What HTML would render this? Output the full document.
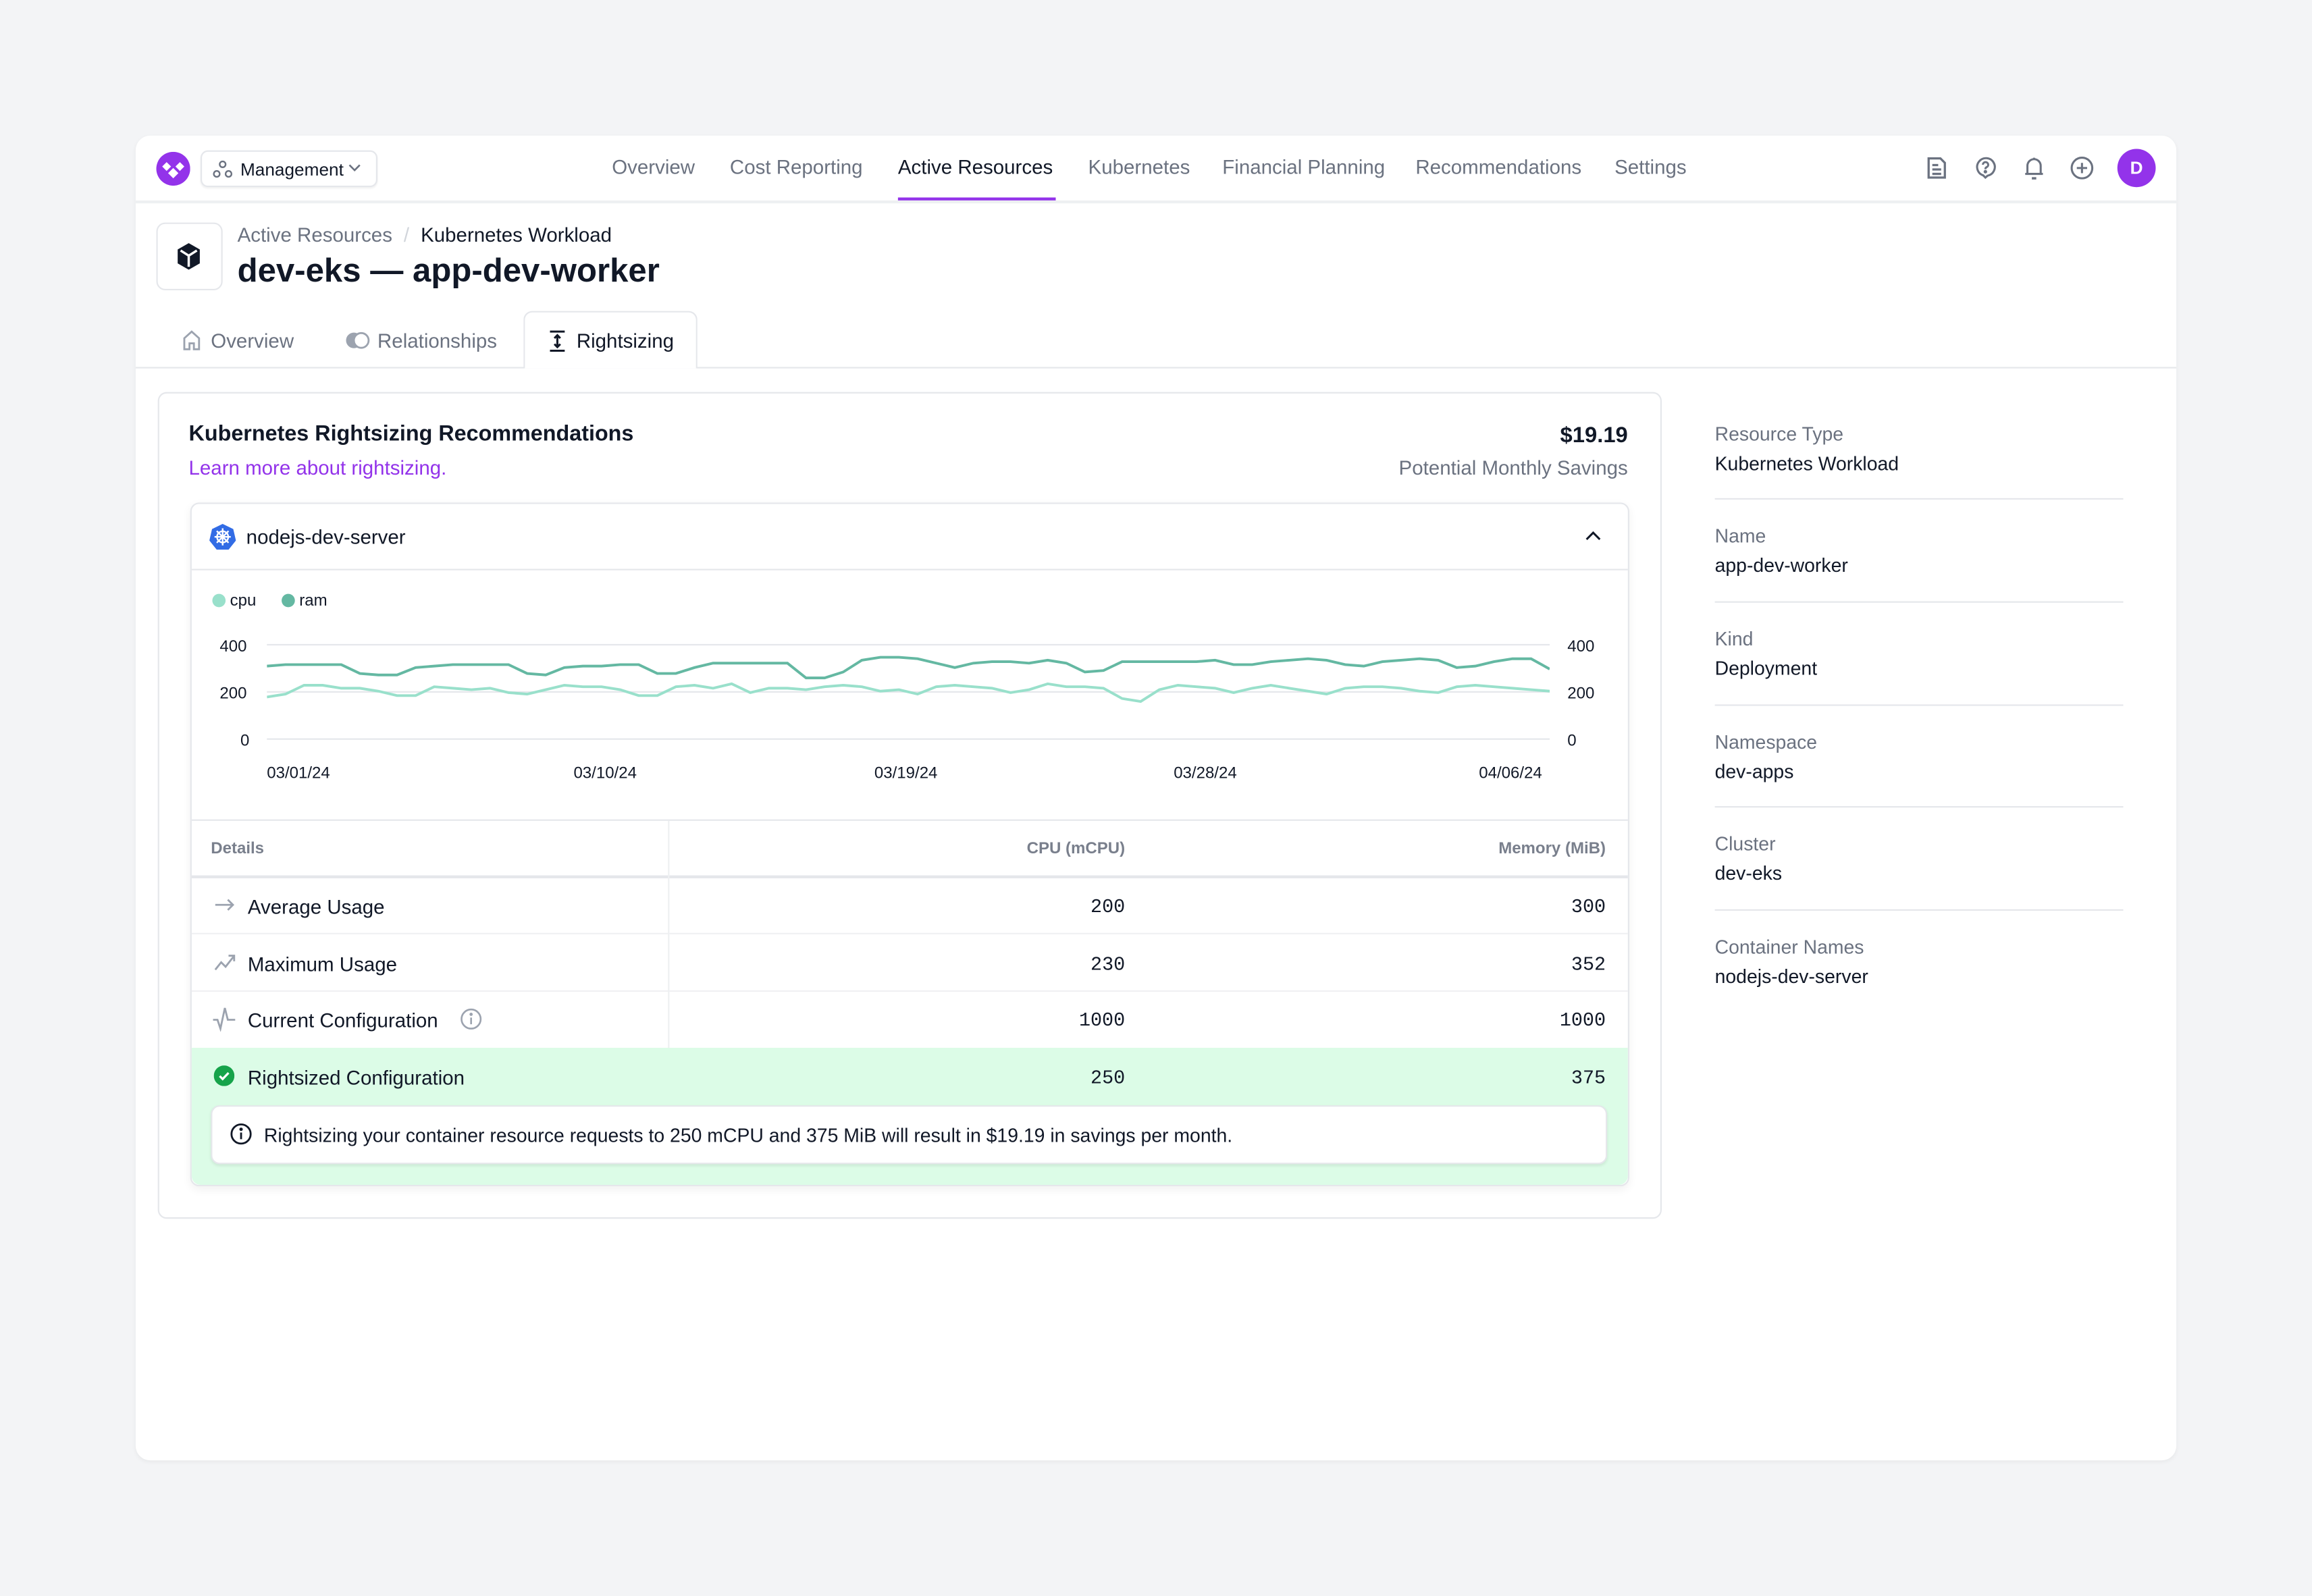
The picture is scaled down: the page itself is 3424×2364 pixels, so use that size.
<!DOCTYPE html>
<html><head><meta charset="utf-8"><style>
*{box-sizing:border-box;margin:0;padding:0}
html,body{width:3424px;height:2364px;overflow:hidden;background:#f3f4f6}
body{font-family:"Liberation Sans",Arial,sans-serif;color:#111827}
#s{position:absolute;left:0;top:0;width:1568px;height:1083px;transform:scale(2.18367,2.18283);transform-origin:0 0}
.a{position:absolute;white-space:nowrap}
.card{position:absolute;left:92px;top:92px;width:1384px;height:899px;background:#fff;border-radius:10px;box-shadow:0 1px 3px rgba(0,0,0,.05)}
.nav{font-size:13.5px;color:#6b7280;top:106px}
.g{color:#6b7280}
.lbl{font-size:13px;color:#6b7280}
.val{font-size:13px;color:#111827}
.hr{position:absolute;height:1px;background:#e5e7eb}
.mono{font-family:"Liberation Mono",monospace;font-size:13px}
</style></head><body><div id="s">
<div class="card"></div>
<div class="hr" style="left:92px;top:136px;width:1384px;background:#eef0f2;height:2px"></div>
<svg class="a" style="left:106px;top:103px" width="23" height="23" viewBox="0 0 23 23"><circle cx="11.5" cy="11.5" r="11.5" fill="#9333ea"/><path d="M7 7l3 3-3 3-3-3zM16 7l3 3-3 3-3-3zM11.5 11l3.5 3.5-3.5 3.5-3.5-3.5z" fill="#fff"/></svg>
<div class="a" style="left:136px;top:102px;width:120px;height:25px;border:1px solid #e5e7eb;border-radius:5px;box-shadow:0 1px 1px rgba(0,0,0,.05)"></div>
<svg class="a" style="left:144px;top:108px" width="14" height="14" viewBox="0 0 14 14" fill="none" stroke="#6b7280" stroke-width="1.1"><circle cx="7" cy="3.5" r="2"/><circle cx="3" cy="10" r="2"/><circle cx="11" cy="10" r="2"/></svg>
<div class="a" style="left:163px;top:108px;font-size:12px;color:#111827">Management</div>
<svg class="a" style="left:236px;top:111px" width="9" height="6" viewBox="0 0 9 6"><path d="M1 1l3.5 3.5L8 1" stroke="#6b7280" fill="none" stroke-width="1.2"/></svg>
<div class="a nav" style="left:415px">Overview</div>
<div class="a nav" style="left:495px">Cost Reporting</div>
<div class="a nav" style="left:609px;color:#111827">Active Resources</div>
<div class="a" style="left:609px;top:134px;width:107px;height:2px;background:#9333ea"></div>
<div class="a nav" style="left:738px">Kubernetes</div>
<div class="a nav" style="left:829px">Financial Planning</div>
<div class="a nav" style="left:960px">Recommendations</div>
<div class="a nav" style="left:1095px">Settings</div>
<svg class="a" style="left:1306px;top:106px" width="15" height="16" viewBox="0 0 15 16" fill="none" stroke="#6b7280" stroke-width="1.5"><path d="M2 1.5h8l3 3v10H2z"/><path d="M4.5 6h4M4.5 9h6M4.5 12h6"/></svg>
<svg class="a" style="left:1339px;top:106px" width="15" height="16" viewBox="0 0 15 16" fill="none" stroke="#6b7280" stroke-width="1.4"><path d="M7.5 14.5L6 13A6 6 0 1 1 9 13.2z"/><path d="M5.8 5.8a1.8 1.8 0 1 1 2.4 1.7c-.6.3-.7.7-.7 1.3"/><circle cx="7.5" cy="10.5" r=".5" fill="#6b7280"/></svg>
<svg class="a" style="left:1372px;top:105px" width="15" height="18" viewBox="0 0 15 18" fill="none" stroke="#6b7280" stroke-width="1.4"><path d="M3 13V7.5a4.5 4.5 0 0 1 9 0V13M1.5 13h12"/><path d="M6 16h3" stroke-width="1.6"/><path d="M7.5 2v1.2"/></svg>
<svg class="a" style="left:1404px;top:106px" width="16" height="16" viewBox="0 0 16 16" fill="none" stroke="#6b7280" stroke-width="1.4"><circle cx="8" cy="8" r="7"/><path d="M8 4.5v7M4.5 8h7"/></svg>
<div class="a" style="left:1436px;top:101px;width:26px;height:26px;border-radius:50%;background:#9333ea;color:#fff;font-size:12px;font-weight:bold;text-align:center;line-height:26px">D</div>
<div class="a" style="left:106px;top:151px;width:45px;height:46px;border:1px solid #e5e7eb;border-radius:6px"></div>
<svg class="a" style="left:119px;top:164px" width="18" height="20" viewBox="0 0 18 20"><path d="M9 1l7.5 4.3v9.4L9 19l-7.5-4.3V5.3z" fill="#111827"/><path d="M3.5 6L9 9.5 14.5 6M9 9.5V17" stroke="#fff" stroke-width="1.6" fill="none"/></svg>
<div class="a" style="left:161px;top:152px;font-size:13.5px"><span class="g">Active Resources</span> <span style="color:#d1d5db;margin:0 4px">/</span> <span>Kubernetes Workload</span></div>
<div class="a" style="left:161px;top:171px;font-size:22.5px;font-weight:bold;letter-spacing:0">dev-eks — app-dev-worker</div>
<div class="hr" style="left:92px;top:249px;width:1384px"></div>
<div class="a" style="left:355px;top:211px;width:118px;height:39px;border:1px solid #e5e7eb;border-bottom:none;border-radius:6px 6px 0 0;background:#fff"></div>
<svg class="a" style="left:124px;top:224px" width="12" height="14" viewBox="0 0 12 14" fill="none" stroke="#9ca3af" stroke-width="1.3"><path d="M1 13V5.5L6 1l5 4.5V13H7.5V9h-3v4z"/></svg>
<div class="a" style="left:143px;top:224px;font-size:13.5px"><span class="g">Overview</span></div>
<svg class="a" style="left:234px;top:225px" width="17" height="12" viewBox="0 0 17 12"><circle cx="6" cy="6" r="5.3" fill="#9ca3af"/><circle cx="11" cy="6" r="5" fill="#fff" stroke="#9ca3af" stroke-width="1.3"/></svg>
<div class="a" style="left:256px;top:224px;font-size:13.5px"><span class="g">Relationships</span></div>
<svg class="a" style="left:372px;top:224px" width="12" height="15" viewBox="0 0 12 15" fill="none" stroke="#111827" stroke-width="1.4"><path d="M1 1h10M1 14h10M6 3.5v8M4 5.5l2-2 2 2M4 9.5l2 2 2-2"/></svg>
<div class="a" style="left:391px;top:224px;font-size:13.5px">Rightsizing</div>
<div class="a" style="left:107px;top:266px;width:1020px;height:561px;border:1px solid #e5e7eb;border-radius:6px"></div>
<div class="a" style="left:128px;top:287px;font-size:14.8px;font-weight:bold">Kubernetes Rightsizing Recommendations</div>
<div class="a" style="left:128px;top:310px;font-size:13.5px;color:#9333ea">Learn more about rightsizing.</div>
<div class="a" style="right:464px;top:287px;font-size:15px;font-weight:bold">$19.19</div>
<div class="a" style="right:464px;top:310px;font-size:13.5px"><span class="g">Potential Monthly Savings</span></div>
<div class="a" style="left:129px;top:341px;width:976px;height:464px;border:1px solid #e5e7eb;border-radius:6px;box-shadow:0 2px 6px rgba(0,0,0,.06)"></div>
<svg class="a" style="left:142px;top:355px" width="18" height="18" viewBox="0 0 18 18"><path d="M9 .5l7.2 3.5 1.8 7.8-5 6.2H5l-5-6.2L1.8 4z" fill="#326ce5"/><g stroke="#fff" stroke-width="1.1" fill="none"><circle cx="9" cy="9.3" r="3.8"/><path d="M9 3.5v11.6M3.5 9.3h11M5 5.3l8 8M13 5.3l-8 8"/></g></svg>
<div class="a" style="left:167px;top:357px;font-size:13.5px">nodejs-dev-server</div>
<svg class="a" style="left:1075px;top:360px" width="11" height="7" viewBox="0 0 11 7"><path d="M1 6l4.5-4.5L10 6" stroke="#111827" stroke-width="1.4" fill="none"/></svg>
<div class="hr" style="left:130px;top:386px;width:974px"></div>
<div class="a" style="left:144px;top:403px;width:9px;height:9px;border-radius:50%;background:#99e0cb"></div>
<div class="a" style="left:156px;top:402px;font-size:11px">cpu</div>
<div class="a" style="left:191px;top:403px;width:9px;height:9px;border-radius:50%;background:#64b8a2"></div>
<div class="a" style="left:203px;top:402px;font-size:11px">ram</div>
<div class="hr" style="left:181px;top:437px;width:870px"></div>
<div class="hr" style="left:181px;top:469px;width:870px"></div>
<div class="hr" style="left:181px;top:501px;width:870px"></div>
<div class="a" style="left:149px;top:433px;font-size:11px">400</div>
<div class="a" style="left:149px;top:465px;font-size:11px">200</div>
<div class="a" style="left:163px;top:497px;font-size:11px">0</div>
<div class="a" style="left:1063px;top:433px;font-size:11px">400</div>
<div class="a" style="left:1063px;top:465px;font-size:11px">200</div>
<div class="a" style="left:1063px;top:497px;font-size:11px">0</div>
<svg class="a" style="left:181px;top:430px" width="870" height="80" viewBox="0 430 69 80" preserveAspectRatio="none">
<polyline vector-effect="non-scaling-stroke" fill="none" stroke="#99e0cb" stroke-width="1.8" points="0,473 1,471 2,465 3,465 4,467 5,467 6,469 7,472 8,472 9,466 10,467 11,468 12,467 13,470 14,471 15,468 16,465 17,466 18,466 19,468 20,472 21,472 22,466 23,465 24,467 25,464 26,470 27,467 28,467 29,468 30,466 31,465 32,466 33,469 34,468 35,471 36,466 37,465 38,466 39,467 40,470 41,468 42,464 43,466 44,466 45,467 46,474 47,476 48,468 49,465 50,466 51,467 52,470 53,467 54,465 55,467 56,469 57,471 58,467 59,466 60,466 61,467 62,469 63,470 64,466 65,465 66,466 67,467 68,468 69,469"/>
<polyline vector-effect="non-scaling-stroke" fill="none" stroke="#64b8a2" stroke-width="1.8" points="0,452 1,451 2,451 3,451 4,451 5,457 6,458 7,458 8,453 9,452 10,451 11,451 12,451 13,451 14,457 15,458 16,453 17,452 18,452 19,451 20,451 21,457 22,457 23,453 24,450 25,450 26,450 27,450 28,450 29,460 30,460 31,456 32,448 33,446 34,446 35,447 36,450 37,453 38,450 39,449 40,449 41,450 42,448 43,450 44,456 45,455 46,449 47,449 48,449 49,449 50,449 51,448 52,451 53,451 54,449 55,448 56,447 57,448 58,451 59,452 60,449 61,448 62,447 63,448 64,453 65,452 66,449 67,447 68,447 69,454"/>
</svg>
<div class="a" style="left:181px;top:519px;font-size:11px">03/01/24</div>
<div class="a" style="left:389px;top:519px;font-size:11px">03/10/24</div>
<div class="a" style="left:593px;top:519px;font-size:11px">03/19/24</div>
<div class="a" style="left:796px;top:519px;font-size:11px">03/28/24</div>
<div class="a" style="left:1003px;top:519px;font-size:11px">04/06/24</div>
<div class="hr" style="left:130px;top:556px;width:974px"></div>
<div class="hr" style="left:130px;top:594px;width:974px;height:2px"></div>
<div class="hr" style="left:130px;top:633px;width:974px;background:#f0f1f3"></div>
<div class="hr" style="left:130px;top:672px;width:974px;background:#f0f1f3"></div>
<div class="a" style="left:453px;top:557px;width:1px;height:154px;background:#eef0f2"></div>
<div class="a" style="left:130px;top:711px;width:974px;height:93px;background:#dcfce7;border-radius:0 0 6px 6px"></div>
<div class="a" style="left:143px;top:570px;font-size:11px;color:#6b7280;font-weight:bold;opacity:.9">Details</div>
<div class="a" style="right:805px;top:570px;font-size:11px;color:#6b7280;font-weight:bold;opacity:.9">CPU (mCPU)</div>
<div class="a" style="right:479px;top:570px;font-size:11px;color:#6b7280;font-weight:bold;opacity:.9">Memory (MiB)</div>
<svg class="a" style="left:145px;top:609px" width="15" height="10" viewBox="0 0 15 10" fill="none" stroke="#9ca3af" stroke-width="1.3"><path d="M1 5h12M9.5 1.5L13 5 9.5 8.5"/></svg>
<svg class="a" style="left:145px;top:646px" width="15" height="14" viewBox="0 0 15 14" fill="none" stroke="#9ca3af" stroke-width="1.3"><path d="M1 12l4-5 3 3 5.5-7M10 2.5h3.8v3.8"/></svg>
<svg class="a" style="left:144px;top:683px" width="16" height="17" viewBox="0 0 16 17" fill="none" stroke="#9ca3af" stroke-width="1.3"><path d="M0.5 9h3l2 6 3-14 2 8h5"/></svg>
<svg class="a" style="left:145px;top:723px" width="14" height="14" viewBox="0 0 14 14"><circle cx="7" cy="7" r="7" fill="#16a34a"/><path d="M4 7.2l2 2 4-4.2" stroke="#fff" stroke-width="1.5" fill="none"/></svg>
<div class="a" style="left:168px;top:608px;font-size:13.5px">Average Usage</div>
<div class="a" style="left:168px;top:647px;font-size:13.5px">Maximum Usage</div>
<div class="a" style="left:168px;top:685px;font-size:13.5px">Current Configuration</div>
<svg class="a" style="left:312px;top:684px" width="15" height="15" viewBox="0 0 15 15" fill="none" stroke="#9ca3af" stroke-width="1.2"><circle cx="7.5" cy="7.5" r="6.5"/><path d="M7.5 6.5v4.5"/><circle cx="7.5" cy="4.3" r=".5" fill="#9ca3af"/></svg>
<div class="a" style="left:168px;top:724px;font-size:13.5px">Rightsized Configuration</div>
<div class="a mono" style="right:805px;top:608px">200</div>
<div class="a mono" style="right:805px;top:647px">230</div>
<div class="a mono" style="right:805px;top:685px">1000</div>
<div class="a mono" style="right:805px;top:724px">250</div>
<div class="a mono" style="right:479px;top:608px">300</div>
<div class="a mono" style="right:479px;top:647px">352</div>
<div class="a mono" style="right:479px;top:685px">1000</div>
<div class="a mono" style="right:479px;top:724px">375</div>
<div class="a" style="left:143px;top:750px;width:947px;height:40px;background:#fff;border:1px solid #e5e7eb;border-radius:6px;box-shadow:0 1px 2px rgba(0,0,0,.08)"></div>
<svg class="a" style="left:156px;top:762px" width="15" height="15" viewBox="0 0 15 15" fill="none" stroke="#111827" stroke-width="1.3"><circle cx="7.5" cy="7.5" r="6.5"/><path d="M7.5 6.5v4.5"/><circle cx="7.5" cy="4.3" r=".5" fill="#111827"/></svg>
<div class="a" style="left:179px;top:763px;font-size:13px">Rightsizing your container resource requests to 250 mCPU and 375 MiB will result in $19.19 in savings per month.</div>
<div class="a lbl" style="left:1163px;top:287px">Resource Type</div>
<div class="a val" style="left:1163px;top:307px">Kubernetes Workload</div>
<div class="hr" style="left:1163px;top:338px;width:277px"></div>
<div class="a lbl" style="left:1163px;top:356px">Name</div>
<div class="a val" style="left:1163px;top:376px">app-dev-worker</div>
<div class="hr" style="left:1163px;top:408px;width:277px"></div>
<div class="a lbl" style="left:1163px;top:426px">Kind</div>
<div class="a val" style="left:1163px;top:446px">Deployment</div>
<div class="hr" style="left:1163px;top:478px;width:277px"></div>
<div class="a lbl" style="left:1163px;top:496px">Namespace</div>
<div class="a val" style="left:1163px;top:516px">dev-apps</div>
<div class="hr" style="left:1163px;top:547px;width:277px"></div>
<div class="a lbl" style="left:1163px;top:565px">Cluster</div>
<div class="a val" style="left:1163px;top:585px">dev-eks</div>
<div class="hr" style="left:1163px;top:617px;width:277px"></div>
<div class="a lbl" style="left:1163px;top:635px">Container Names</div>
<div class="a val" style="left:1163px;top:655px">nodejs-dev-server</div>
</div></body></html>
